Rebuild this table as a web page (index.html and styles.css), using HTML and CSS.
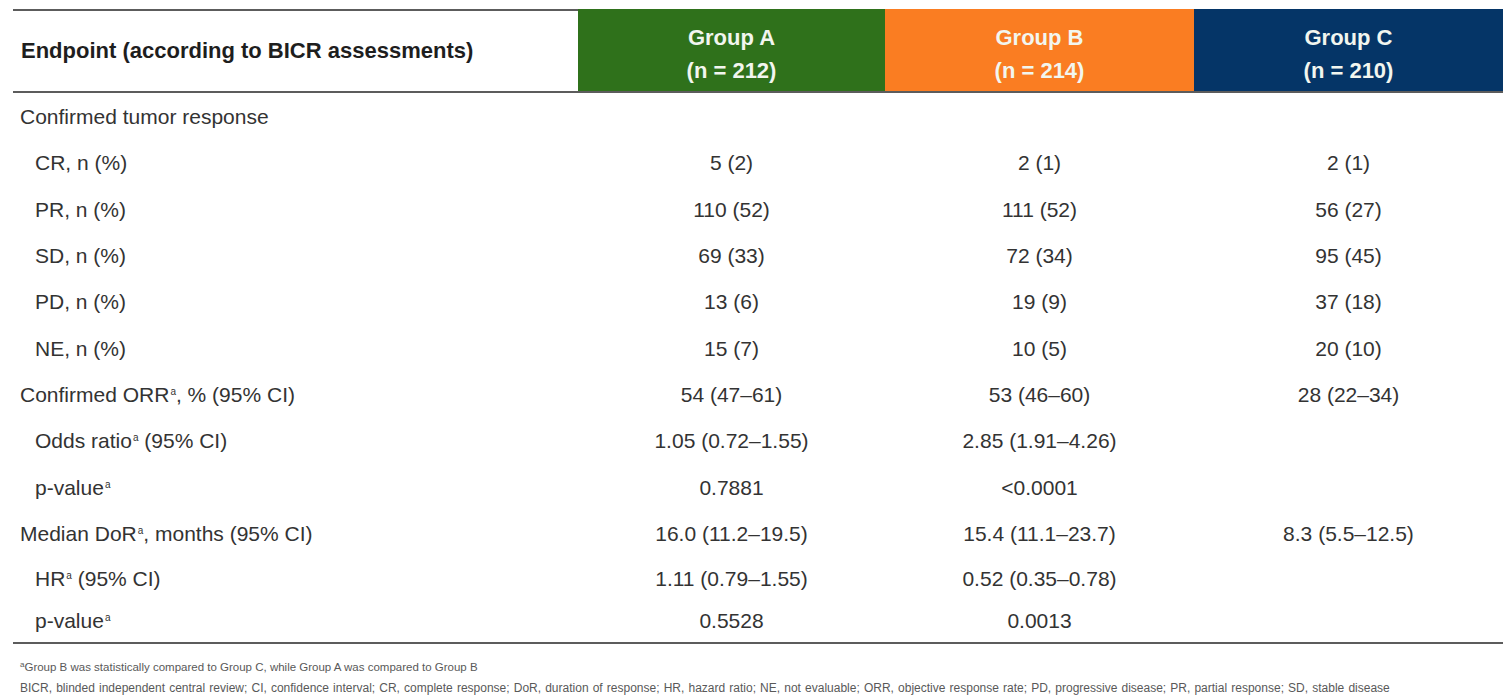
FILE: index.html
```html
<!DOCTYPE html>
<html lang="en">
<head>
<meta charset="utf-8">
<title>Endpoint table</title>
<link rel="stylesheet" href="styles.css">
</head>
<body>
<div class="table">
  <div class="row head">
    <div class="cell label-head">Endpoint (according to BICR assessments)</div>
    <div class="cell group group-a">Group A<br>(n = 212)</div>
    <div class="cell group group-b">Group B<br>(n = 214)</div>
    <div class="cell group group-c">Group C<br>(n = 210)</div>
  </div>
  <div class="body">
    <div class="row">
      <div class="cell label">Confirmed tumor response</div>
      <div class="cell val"></div><div class="cell val"></div><div class="cell val"></div>
    </div>
    <div class="row">
      <div class="cell label sub">CR, n (%)</div>
      <div class="cell val">5 (2)</div><div class="cell val">2 (1)</div><div class="cell val">2 (1)</div>
    </div>
    <div class="row">
      <div class="cell label sub">PR, n (%)</div>
      <div class="cell val">110 (52)</div><div class="cell val">111 (52)</div><div class="cell val">56 (27)</div>
    </div>
    <div class="row">
      <div class="cell label sub">SD, n (%)</div>
      <div class="cell val">69 (33)</div><div class="cell val">72 (34)</div><div class="cell val">95 (45)</div>
    </div>
    <div class="row">
      <div class="cell label sub">PD, n (%)</div>
      <div class="cell val">13 (6)</div><div class="cell val">19 (9)</div><div class="cell val">37 (18)</div>
    </div>
    <div class="row">
      <div class="cell label sub">NE, n (%)</div>
      <div class="cell val">15 (7)</div><div class="cell val">10 (5)</div><div class="cell val">20 (10)</div>
    </div>
    <div class="row">
      <div class="cell label">Confirmed ORR<sup class="sup">a</sup>, % (95% CI)</div>
      <div class="cell val">54 (47–61)</div><div class="cell val">53 (46–60)</div><div class="cell val">28 (22–34)</div>
    </div>
    <div class="row">
      <div class="cell label sub">Odds ratio<sup class="sup">a</sup> (95% CI)</div>
      <div class="cell val">1.05 (0.72–1.55)</div><div class="cell val">2.85 (1.91–4.26)</div><div class="cell val"></div>
    </div>
    <div class="row">
      <div class="cell label sub">p-value<sup class="sup">a</sup></div>
      <div class="cell val">0.7881</div><div class="cell val">&lt;0.0001</div><div class="cell val"></div>
    </div>
    <div class="row">
      <div class="cell label">Median DoR<sup class="sup">a</sup>, months (95% CI)</div>
      <div class="cell val">16.0 (11.2–19.5)</div><div class="cell val">15.4 (11.1–23.7)</div><div class="cell val">8.3 (5.5–12.5)</div>
    </div>
    <div class="row short">
      <div class="cell label sub">HR<sup class="sup">a</sup> (95% CI)</div>
      <div class="cell val">1.11 (0.79–1.55)</div><div class="cell val">0.52 (0.35–0.78)</div><div class="cell val"></div>
    </div>
    <div class="row short last">
      <div class="cell label sub">p-value<sup class="sup">a</sup></div>
      <div class="cell val">0.5528</div><div class="cell val">0.0013</div><div class="cell val"></div>
    </div>
  </div>
</div>
<div class="notes">
  <p class="note note-first"><sup class="note-sup">a</sup>Group B was statistically compared to Group C, while Group A was compared to Group B</p>
  <p class="note note-wide">BICR, blinded independent central review; CI, confidence interval; CR, complete response; DoR, duration of response; HR, hazard ratio; NE, not evaluable; ORR, objective response rate; PD, progressive disease; PR, partial response; SD, stable disease</p>
</div>
</body>
</html>
```

FILE: styles.css
```css
html, body {
  margin: 0;
  padding: 0;
  background: #ffffff;
}

body {
  font-family: "Liberation Sans", Arial, sans-serif;
  color: #333333;
}

.table {
  margin: 9px 0 0 13px;
  width: 1490px;
  border-top: 2px solid #5c5c5c;
  border-bottom: 2px solid #5c5c5c;
}

.row {
  display: grid;
  grid-template-columns: 565px 307px 309px 309px;
  height: 46.3px;
  align-items: center;
}

.row.short {
  height: 43.5px;
}

.row.last {
  height: 41.5px;
}

.row.head {
  height: 80px;
  align-items: stretch;
  border-bottom: 2px solid #5c5c5c;
}

.cell {
  white-space: nowrap;
}

.label-head {
  display: flex;
  align-items: center;
  padding-left: 8px;
  font-weight: bold;
  font-size: 22px;
  color: #1e1e1e;
}

.group {
  display: flex;
  align-items: center;
  justify-content: center;
  text-align: center;
  font-weight: bold;
  font-size: 22px;
  line-height: 33px;
  color: #f2f6ef;
  margin-top: -2px;
  padding-top: 8px;
}

.group-a { background: #2f711b; }
.group-b { background: #fa7d22; }
.group-c { background: #053567; }

.body {
  padding-top: 1px;
}

.label {
  font-size: 21px;
  padding-left: 7px;
  color: #333333;
}

.label.sub {
  padding-left: 22px;
}

.val {
  font-size: 21px;
  text-align: center;
  color: #333333;
}

.sup {
  font-size: 10px;
  vertical-align: 7px;
  line-height: 0;
  margin-left: 1px;
}

.notes {
  padding: 13px 0 0 20px;
}

.note {
  margin: 0;
  font-size: 12px;
  line-height: 21px;
  color: #595959;
  white-space: nowrap;
}

.note-first {
  font-size: 11.5px;
}

.note-wide {
  word-spacing: 0.8px;
}

.note-sup {
  font-size: 8px;
  vertical-align: 4px;
  line-height: 0;
}
```
